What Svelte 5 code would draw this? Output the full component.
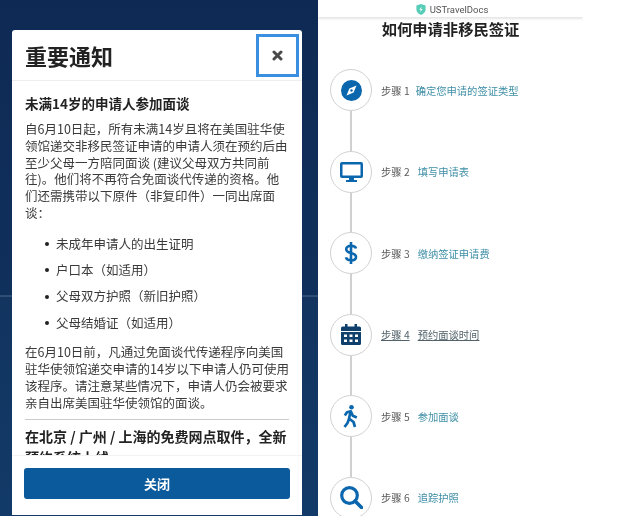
<script>
	const bullets = ['未成年申请人的出生证明', '户口本（如适用）', '父母双方护照（新旧护照）', '父母结婚证（如适用）'];

	const steps = [
		{ n: 1, label: '确定您申请的签证类型', icon: 'compass' },
		{ n: 2, label: '填写申请表', icon: 'monitor' },
		{ n: 3, label: '缴纳签证申请费', icon: 'dollar' },
		{ n: 4, label: '预约面谈时间', icon: 'calendar', active: true },
		{ n: 5, label: '参加面谈', icon: 'walk' },
		{ n: 6, label: '追踪护照', icon: 'search' }
	];
</script>

<div class="page">
	<section class="left">
		<div class="modal">
			<header class="modal-head">
				<h1>重要通知</h1>
				<button class="close" aria-label="关闭">
					<svg width="11" height="11" viewBox="0 0 11 11">
						<path d="M2 2l7 7M9 2l-7 7" stroke="#4a4a4a" stroke-width="3" stroke-linecap="round" />
					</svg>
				</button>
			</header>
			<div class="modal-body">
				<h2>未满14岁的申请人参加面谈</h2>
				<p>自6月10日起，所有未满14岁且将在美国驻华使领馆递交非移民签证申请的申请人须在预约后由至少父母一方陪同面谈 (建议父母双方共同前往)。他们将不再符合免面谈代传递的资格。他们还需携带以下原件（非复印件）一同出席面谈：</p>
				<ul>
					{#each bullets as b}
						<li>{b}</li>
					{/each}
				</ul>
				<p>在6月10日前，凡通过免面谈代传递程序向美国驻华使领馆递交申请的14岁以下申请人仍可使用该程序。请注意某些情况下，申请人仍会被要求亲自出席美国驻华使领馆的面谈。</p>
				<hr />
				<h2 class="second">在北京 / 广州 / 上海的免费网点取件，全新预约系统上线</h2>
			</div>
			<footer class="modal-foot">
				<button class="primary">关闭</button>
			</footer>
		</div>
	</section>

	<section class="right">
		<div class="brand">
			<svg width="10" height="11" viewBox="0 0 10 11">
				<path d="M5 0l4.600 1.600v3.600c0 2.700-2 4.700-4.600 5.800C2.400 9.900.4 7.900.4 5.200V1.600z" fill="#57cdb8" />
				<path d="M5.600 2.500L3.400 5.800h1.500l-.5 2.500 2.200-3.300H5.100z" fill="#fff" />
			</svg>
			<span>USTravelDocs</span>
		</div>
		<h1 class="title">如何申请非移民签证</h1>
		<ol class="steps">
			{#each steps as s, i}
				<li class="step" class:active={s.active}>
					<div class="circle">
						{#if s.icon === 'compass'}
							<svg width="21" height="21" viewBox="0 0 21 21">
								<circle cx="10.500" cy="10.500" r="10.500" fill="#0a66ad" />
								<path d="M15.500 5.500l-2.900 7.100-7.100 2.900 2.900-7.100z" fill="#fff" />
								<circle cx="10.500" cy="10.500" r="1.200" fill="#0a66ad" />
							</svg>
						{:else if s.icon === 'monitor'}
							<svg width="23" height="20" viewBox="0 0 23 20">
								<path fill-rule="evenodd" d="M2 0h19a2 2 0 0 1 2 2v12a2 2 0 0 1-2 2h-7v2h3v2H6v-2h3v-2H2a2 2 0 0 1-2-2V2a2 2 0 0 1 2-2zm.5 2.400v11h18v-11z" fill="#0a66ad" />
							</svg>
						{:else if s.icon === 'dollar'}
							<svg width="14" height="24" viewBox="0 0 14 24">
								<path d="M12 7.500C11.500 5.500 9.500 4.800 7 4.800c-2.800 0-4.800 1.300-4.800 3.400 0 5 9.800 2.600 9.800 7.700 0 2.100-2 3.400-5 3.400-2.700 0-4.600-1-5-3M7 1v22" fill="none" stroke="#0a66ad" stroke-width="2.600" />
							</svg>
						{:else if s.icon === 'calendar'}
							<svg width="20" height="21" viewBox="0 0 20 21">
								<path fill-rule="evenodd" d="M4 0h2.500v2.500h7V0H16v2.500h2.500A1.500 1.500 0 0 1 20 4v3H0V4a1.500 1.500 0 0 1 1.500-1.500H4zM0 8h20v11.500a1.500 1.500 0 0 1-1.500 1.500h-17A1.500 1.500 0 0 1 0 19.500zm3 2.500v2.500h3v-2.500zm5.500 0v2.500h3v-2.500zm5.500 0v2.500h3v-2.500zM3 15.500V18h3v-2.500zm5.500 0V18h3v-2.500zm5.500 0V18h3v-2.500z" fill="#0f3f6b" />
							</svg>
						{:else if s.icon === 'walk'}
							<svg width="16" height="23" viewBox="0 0 16 23">
								<circle cx="8.500" cy="2.300" r="2.300" fill="#0a66ad" />
								<path d="M1.800 10.500L4 7.300 7.800 6.300l2 4.500 4 1.700M7.500 7L6 13.500l4.500 3.500 1.500 5M5.800 14.500L4.500 18 1.500 22" fill="none" stroke="#0a66ad" stroke-width="2.700" stroke-linejoin="round" />
							</svg>
						{:else}
							<svg width="23" height="23" viewBox="0 0 23 23">
								<circle cx="9.500" cy="9.500" r="7.800" fill="none" stroke="#0a66ad" stroke-width="3.200" />
								<path d="M15 15l6.500 6.500" stroke="#0a66ad" stroke-width="3.600" stroke-linecap="round" />
							</svg>
						{/if}
					</div>
					<span class="num">步骤 {s.n}</span>
					<span class="link">{s.label}</span>
				</li>
				{#if i < steps.length - 1}
					<li class="connector" aria-hidden="true"></li>
				{/if}
			{/each}
		</ol>
	</section>
</div>

<style>
	:global(body) {
		margin: 0;
		background: #fff;
	}

	.page {
		display: grid;
		grid-template-columns: 318px 265px 1fr;
		width: 640px;
		height: 516px;
		overflow: hidden;
		font-family: 'Noto Sans CJK SC', 'Noto Sans', sans-serif;
		filter: blur(0.35px);
	}

	.left {
		padding: 30px 16px 0 12px;
		box-sizing: border-box;
		height: 516px;
		background: linear-gradient(to bottom, #0e2a54 0, #10305c 295px, #4f6a8c 296px, #12345f 297px, #123a68 100%);
	}

	.modal {
		display: flex;
		flex-direction: column;
		height: 485px;
		background: #fff;
		border-radius: 3px;
		color: #2b2b2b;
	}

	.modal-head {
		display: flex;
		justify-content: space-between;
		align-items: center;
		height: 50px;
		padding: 0 3px 0 13px;
		border-bottom: 1px solid #eee;
	}

	.modal-head h1 {
		margin: 0;
		font-size: 22px;
		font-weight: 700;
		color: #222;
	}

	.close {
		display: flex;
		align-items: center;
		justify-content: center;
		width: 43px;
		height: 43px;
		padding: 0;
		background: #fff;
		border: 3px solid #3a8fe0;
		box-sizing: border-box;
	}

	.modal-body {
		flex: 1;
		min-height: 0;
		overflow: hidden;
		padding: 13px 13px 0;
		font-size: 12.5px;
		line-height: 16.8px;
	}

	h2 {
		margin: 0 0 9px;
		font-size: 13.5px;
		line-height: 18px;
		font-weight: 700;
		color: #222;
	}

	p {
		margin: 0;
		color: #3a3a3a;
	}

	ul {
		list-style: none;
		margin: 14px 0 13px;
		padding: 0 0 0 20px;
		color: #3a3a3a;
	}

	li {
		margin: 0;
	}

	ul li {
		display: flex;
		align-items: center;
		gap: 7px;
		padding: 0 0 9.5px;
	}

	ul li::before {
		content: '';
		flex: none;
		width: 4px;
		height: 4px;
		border-radius: 50%;
		background: #222;
	}

	ul li:last-child {
		padding-bottom: 0;
	}

	hr {
		margin: 7px 0 6px;
		border: 0;
		border-top: 1px solid #ccc;
	}

	.second {
		font-size: 14px;
		line-height: 21px;
		margin: 0;
	}

	.modal-foot {
		height: 60px;
		padding: 12px 12px 0;
		box-sizing: border-box;
		background: #fff;
		border-top: 1px solid #f2f2f2;
	}

	.primary {
		display: block;
		width: 100%;
		height: 31px;
		padding: 0;
		border: 0;
		border-radius: 3px;
		background: #0a5a9c;
		color: #fff;
		font-family: inherit;
		font-size: 13px;
		font-weight: 700;
	}

	.right {
		height: 516px;
		overflow: hidden;
		background: #fff;
	}

	.brand {
		display: flex;
		align-items: center;
		justify-content: center;
		gap: 4px;
		height: 17px;
		padding: 1px 0 0 3px;
		box-sizing: border-box;
		font-family: Roboto, sans-serif;
		font-size: 9.5px;
		color: #555;
		box-shadow: 0 2px 2px rgba(0, 0, 0, 0.1);
	}

	.title {
		margin: 0;
		height: 24px;
		line-height: 22px;
		text-align: center;
		font-size: 15.3px;
		font-weight: 700;
		color: #222;
	}

	.steps {
		list-style: none;
		margin: 0;
		padding: 28px 0 0 12px;
	}

	.step {
		display: flex;
		align-items: center;
		height: 42px;
		font-size: 10.3px;
	}

	.circle {
		display: flex;
		align-items: center;
		justify-content: center;
		flex: none;
		width: 42px;
		height: 42px;
		box-sizing: border-box;
		border: 1px solid #d2d2d2;
		border-radius: 50%;
		background: #fff;
	}

	.num {
		margin-left: 9px;
		margin-right: 8px;
		color: #5c5c5c;
	}

	.link {
		color: #3f8ea6;
	}

	.step:first-child .link {
		margin-left: -2px;
	}

	.active .num,
	.active .link {
		text-decoration: underline;
		color: #52626a;
	}

	.connector {
		width: 2px;
		height: 39.5px;
		margin-left: 20px;
		background: #d0d0d0;
	}
</style>
